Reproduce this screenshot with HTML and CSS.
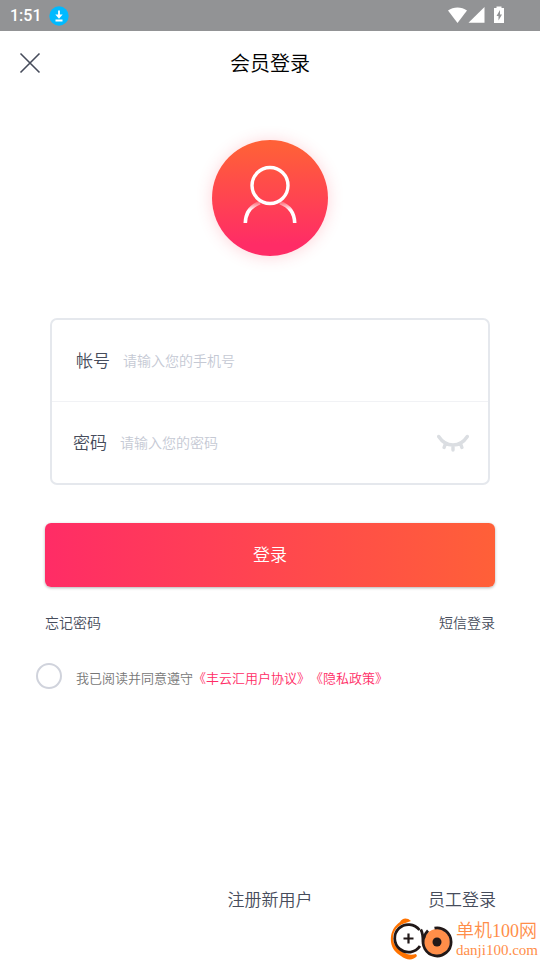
FILE: index.html
```html
<!DOCTYPE html>
<html lang="zh-CN">
<head>
<meta charset="utf-8">
<meta name="viewport" content="width=device-width, initial-scale=1">
<title>会员登录</title>
<link rel="stylesheet" href="styles.css">
</head>
<body>
<div class="status">
  <span class="status-time">1:51</span>
  <svg class="status-download" viewBox="0 0 20 20" aria-hidden="true">
    <circle cx="10" cy="10" r="9.7" fill="#00baff"/>
    <path d="M10 4.500v6M6.500 14.500h7" fill="none" stroke="#fff" stroke-width="1.8"/>
    <path d="M6.300 8.500h7.400L10 12.800z" fill="#fff"/>
  </svg>
  <svg class="status-icons" viewBox="0 0 58 20" aria-hidden="true">
    <path d="M0 4.600C5.500.4 13.500.4 19 4.600L9.500 17z" fill="#fff"/>
    <path d="M36.500 1v15.700H20.500z" fill="#fff"/>
    <path d="M48.500.5h5V2H56v15H46V2h2.500z" fill="#fff"/>
    <path d="M52 4l-3.500 6h2v4.500l3.500-6h-2z" fill="#929395"/>
  </svg>
</div>
<header class="header">
  <button class="close" type="button" aria-label="关闭">
    <svg viewBox="0 0 22 22" aria-hidden="true"><path d="M1.500 1.500l19 19M20.500 1.500l-19 19"/></svg>
  </button>
  <h1 class="title">会员登录</h1>
</header>
<main class="main">
  <div class="avatar">
    <svg viewBox="0 0 116 116" aria-hidden="true">
      <defs>
        <linearGradient id="fade" x1="0" y1="61" x2="0" y2="70" gradientUnits="userSpaceOnUse">
          <stop offset="0" stop-color="#fff" stop-opacity="0.1"/>
          <stop offset="1" stop-color="#fff"/>
        </linearGradient>
      </defs>
      <circle cx="58" cy="45.500" r="18" fill="none" stroke="#fff" stroke-width="3.400"/>
      <path d="M33.300 83C33.500 73 39 66 48 62.500M82.700 83C82.500 73 77 66 68 62.500" fill="none" stroke="url(#fade)" stroke-width="3.600"/>
    </svg>
  </div>
  <form class="form">
    <div class="fields">
      <div class="row row-account">
        <label for="account">帐号</label>
        <input id="account" type="tel" placeholder="请输入您的手机号">
      </div>
      <div class="row row-password">
        <label for="password">密码</label>
        <input id="password" type="password" placeholder="请输入您的密码">
        <button class="reveal" type="button" aria-label="显示密码">
          <svg viewBox="0 0 32 18" aria-hidden="true"><path d="M1.700 2.500C9 13.800 23 13.800 30.300 2.500M8.300 10l-1.200 3.500M16 11v5M23.700 10l1.200 3.500"/></svg>
        </button>
      </div>
    </div>
    <button class="submit" type="button">登录</button>
    <div class="links">
      <a href="#">忘记密码</a>
      <a href="#">短信登录</a>
    </div>
    <div class="agree">
      <input id="agree" type="checkbox">
      <p><label for="agree">我已阅读并同意遵守</label><a href="#">《丰云汇用户协议》</a><a href="#">《隐私政策》</a></p>
    </div>
  </form>
</main>
<footer class="footer">
  <a class="register" href="#">注册新用户</a>
  <a class="staff" href="#">员工登录</a>
</footer>
<div class="mark">
  <svg viewBox="0 0 64 42" aria-hidden="true">
    <path d="M21 3C17-1 12 0 10 4 4 8 0 15 1 24c1 7 5 11 10 14 5 4 12 5 16 0l-1-2c-4 1-8 1-11-1C8 32 3 27 3 20 3 12 9 7 14 5.500z" fill="#ff7300"/>
    <circle cx="18.500" cy="20.500" r="14" fill="#fff"/>
    <path d="M29.500 12A13.800 13.800 0 1 0 30 28" fill="none" stroke="#211818" stroke-width="2.800"/>
    <path d="M18.500 15.500v10M13.500 20.500h10" stroke="#211818" stroke-width="2.200"/>
    <circle cx="47" cy="24" r="13" fill="#ff8e49"/>
    <path d="M44.500 10.200A14 14 0 1 1 34 19M30.800 11.500C33 15 33 19 33 24M34 20C34.500 17 36 14.500 38 12.500" fill="none" stroke="#211818" stroke-width="2.800"/>
    <circle cx="47" cy="24" r="4.500" fill="#211818"/>
  </svg>
  <div class="mark-text">
    <span class="mark-name">单机100网</span>
    <span class="mark-site">danji100.com</span>
  </div>
</div>
</body>
</html>
```
FILE: styles.css
```css
* {
  box-sizing: border-box;
}

body {
  margin: 0;
  min-height: 100vh;
  display: flex;
  flex-direction: column;
  position: relative;
  background: #fff;
  color: #464c5b;
  font-family: Roboto, "Noto Sans CJK SC", sans-serif;
  font-weight: 350;
  font-kerning: none;
  text-spacing-trim: space-all;
}

a {
  color: inherit;
  text-decoration: none;
}

button {
  padding: 0;
  border: 0;
  background: none;
  font: inherit;
}

svg {
  display: block;
}

.status {
  display: flex;
  align-items: center;
  height: 31px;
  padding: 0 34px 0 10px;
  background: #929395;
  color: #fff;
}

.status-time {
  font-size: 16px;
  font-weight: 500;
}

.status-download {
  width: 20px;
  height: 20px;
  margin-left: 7px;
}

.status-icons {
  width: 58px;
  height: 20px;
  margin-left: auto;
}

.header {
  display: grid;
  grid-template-columns: 22px 1fr 22px;
  align-items: center;
  height: 64px;
  padding: 0 19px;
}

.close svg {
  width: 22px;
  height: 22px;
  fill: none;
  stroke: #464c5b;
  stroke-width: 1.600;
}

.title {
  margin: 0;
  padding-top: 2px;
  color: #000;
  font-size: 20px;
  font-weight: 350;
  line-height: 28px;
  text-align: center;
}

.avatar {
  width: 116px;
  height: 116px;
  margin: 45px auto 62px;
  border-radius: 50%;
  background: linear-gradient(#ff6038 5%, #ff2c66 90%);
  box-shadow: 0 1px 16px rgba(255, 60, 80, 0.22);
}

.form {
  padding: 0 45px;
}

.fields {
  margin: 0 5px;
  border: 2px solid #e5e8ed;
  border-radius: 7px;
}

.row {
  display: flex;
  align-items: center;
  height: 81px;
}

.row-account {
  padding: 0 19px 0 24px;
}

.row-password {
  height: 82px;
  padding: 0 19px 0 21px;
  border-top: 1px solid #f1f2f5;
}

.row label {
  font-size: 17px;
  line-height: 20px;
}

.row input {
  flex: 1;
  min-width: 0;
  height: 20px;
  margin-left: 13px;
  padding: 0;
  border: 0;
  outline: 0;
  background: none;
  color: #464c5b;
  font: inherit;
  font-size: 14px;
  line-height: 20px;
}

.row input::placeholder {
  color: #c5c9d4;
}

.reveal svg {
  width: 32px;
  height: 18px;
  fill: none;
  stroke: #dbdee2;
  stroke-width: 3.400;
  stroke-linecap: round;
}

.submit {
  display: block;
  width: 100%;
  height: 64px;
  margin-top: 38px;
  border-radius: 6px;
  background: linear-gradient(90deg, #ff2c66, #ff6038);
  box-shadow: 0 1px 3px rgba(0, 0, 0, 0.3);
  color: #fff;
  font-size: 17px;
  line-height: 20px;
}

.links {
  display: flex;
  justify-content: space-between;
  margin-top: 26px;
  font-size: 14px;
  line-height: 20px;
}

.agree {
  display: flex;
  align-items: center;
  gap: 14px;
  margin: 30px -9px 0;
  color: #777;
  font-size: 13px;
  line-height: 20px;
}

.agree input {
  appearance: none;
  width: 26px;
  height: 26px;
  margin: 0;
  border: 2px solid #d0d3dc;
  border-radius: 50%;
}

.agree p {
  margin: 6px 0 0;
}

.agree a {
  color: #ff2c66;
}

.footer {
  display: grid;
  grid-template-columns: 1fr auto 1fr;
  margin-top: auto;
  padding: 0 44px 48px;
  font-size: 17px;
  line-height: 24px;
}

.register {
  grid-column: 2;
}

.staff {
  justify-self: end;
}

.mark {
  display: flex;
  gap: 2px;
  position: absolute;
  right: 2px;
  bottom: 0;
  color: #ff8e49;
}

.mark svg {
  width: 64px;
  height: 42px;
}

.mark-text {
  display: flex;
  flex-direction: column;
  padding-top: 1px;
  font-family: "Liberation Serif", "Noto Sans CJK SC", serif;
}

.mark-name {
  font-size: 18px;
  line-height: 24px;
}

.mark-site {
  font-size: 15px;
  line-height: 14px;
}
```
